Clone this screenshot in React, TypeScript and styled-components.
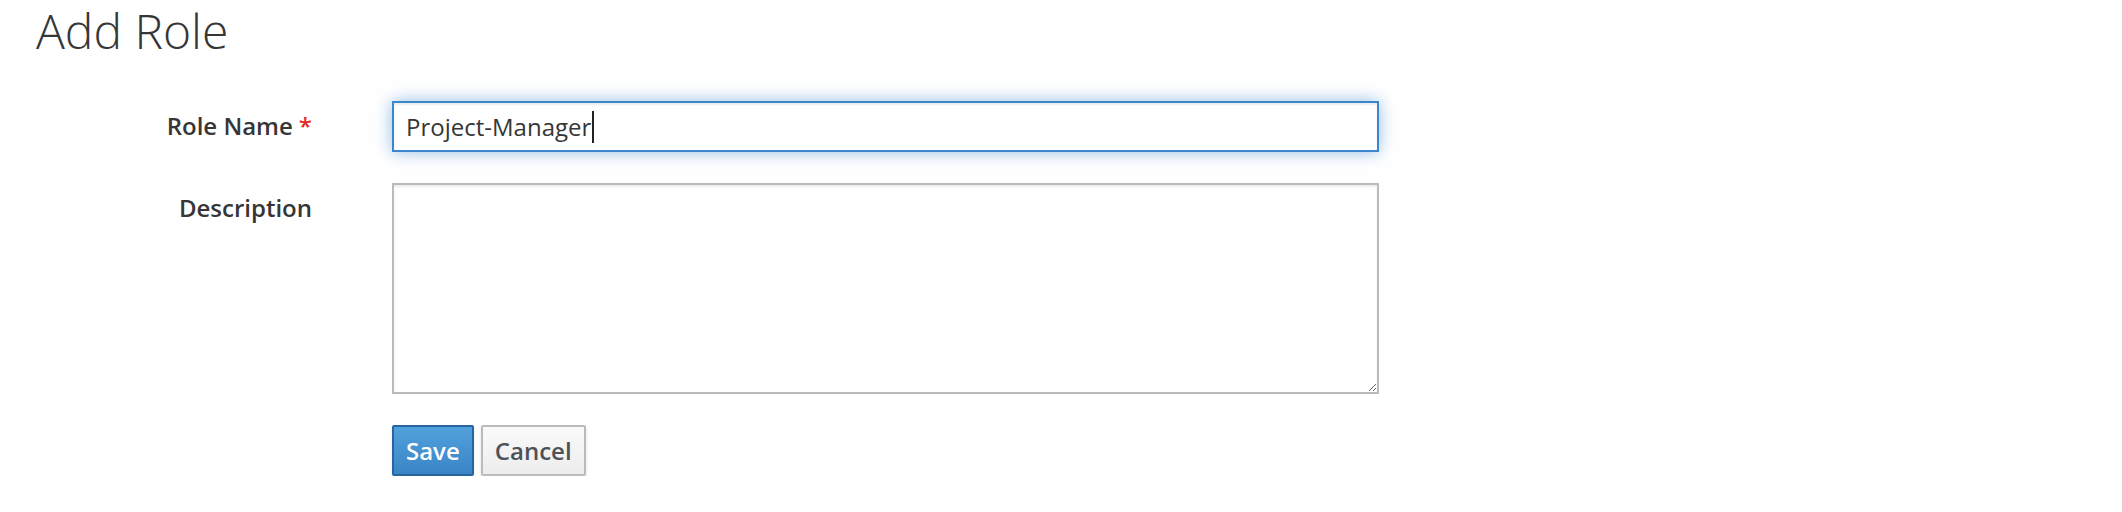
import styled, { createGlobalStyle } from "styled-components";

const GlobalStyle = createGlobalStyle`
  html, body {
    margin: 0;
    padding: 0;
    background: #fff;
  }
  body {
    font-family: "Open Sans", "Noto Sans", sans-serif;
    color: #363636;
  }
`;

const Page = styled.div`
  padding: 5px 0 0 36px;
`;

const Title = styled.h1`
  margin: 0;
  font-size: 48px;
  line-height: 52px;
  font-weight: 300;
  color: #363636;
`;

const Form = styled.form`
  margin-top: 44px;
  display: grid;
  grid-template-columns: 276px 987px;
  column-gap: 80px;
  row-gap: 31px;
`;

const Label = styled.label`
  text-align: right;
  font-size: 24px;
  line-height: 32px;
  font-weight: 600;
  color: #363636;
  padding-top: 9px;
`;

const Required = styled.span`
  color: #e02b1f;
  margin-left: 6px;
`;

const FocusedInput = styled.div`
  box-sizing: border-box;
  height: 51px;
  display: flex;
  align-items: center;
  padding: 0 12px;
  border: 2px solid #3a87cd;
  background: #fff;
  font-size: 24px;
  color: #363636;
  box-shadow: inset 0 2px 2px rgba(3, 3, 3, 0.075),
    0 0 16px rgba(58, 135, 205, 0.55);
`;

const Caret = styled.span`
  display: inline-block;
  width: 2px;
  height: 32px;
  margin-left: 1px;
  background: #222;
`;

const TextArea = styled.textarea`
  box-sizing: border-box;
  display: block;
  width: 987px;
  height: 211px;
  margin: 0;
  border: 2px solid #bbb;
  border-radius: 0;
  font-family: inherit;
  font-size: 24px;
  padding: 8px 12px;
  outline: none;
  box-shadow: inset 0 2px 2px rgba(3, 3, 3, 0.075);
`;

const Actions = styled.div`
  grid-column: 2;
  display: flex;
  gap: 7px;
`;

const Button = styled.button<{ $primary?: boolean }>`
  box-sizing: border-box;
  height: 51px;
  padding: 0 12px;
  border-radius: 2px;
  border: 2px solid ${(p) => (p.$primary ? "#2765a0" : "#bbb")};
  background: ${(p) =>
    p.$primary
      ? "linear-gradient(to bottom, #51a1dc 0%, #3a84c6 100%)"
      : "linear-gradient(to bottom, #fafafa 0%, #ededed 100%)"};
  color: ${(p) => (p.$primary ? "#fff" : "#4d5258")};
  font-family: inherit;
  font-size: 24px;
  font-weight: 600;
  box-shadow: 0 2px 3px rgba(3, 3, 3, 0.12);
  cursor: pointer;
`;

export default function App() {
  return (
    <>
      <GlobalStyle />
      <Page>
        <Title>Add Role</Title>
        <Form onSubmit={(e) => e.preventDefault()}>
          <Label>
            Role Name<Required>*</Required>
          </Label>
          <FocusedInput>
            <span>Project-Manager</span>
            <Caret />
          </FocusedInput>
          <Label>Description</Label>
          <TextArea />
          <Actions>
            <Button $primary>Save</Button>
            <Button>Cancel</Button>
          </Actions>
        </Form>
      </Page>
    </>
  );
}
